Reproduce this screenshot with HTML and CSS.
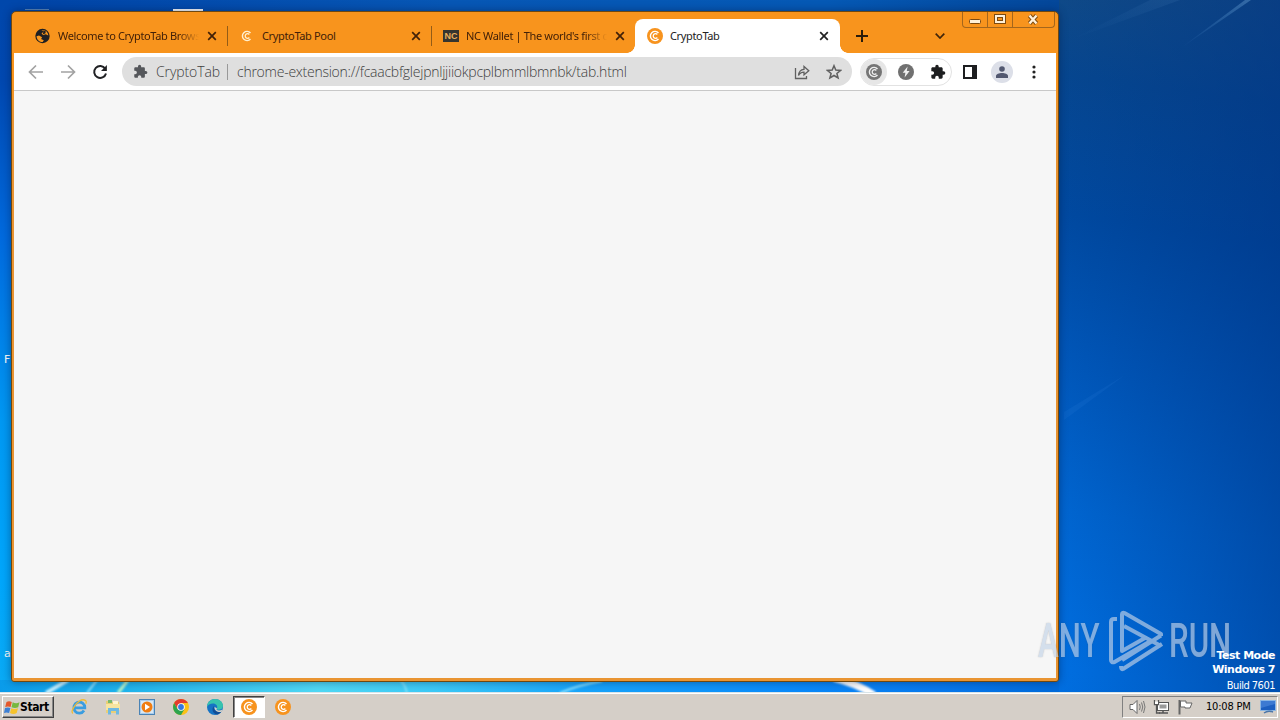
FILE: index.html
```html
<!DOCTYPE html>
<html lang="en">
<head>
    <meta charset="UTF-8">
    <meta name="viewport" content="width=device-width, initial-scale=1.0">
    <title>CryptoTab</title>
    <link rel="stylesheet" href="styles.css">
</head>
<body>
<!-- shared icons -->
<svg class="defs" width="0" height="0">
    <symbol id="coin" viewBox="0 0 16 16">
        <path d="M11.500 5A4.600 4.600 0 1 0 11.500 11" fill="none" stroke="currentColor" stroke-width="1.400"/>
        <path d="M10.300 6.500A2.300 2.300 0 1 0 10.300 9.500" fill="none" stroke="currentColor" stroke-width="1.300"/>
    </symbol>
    <symbol id="close" viewBox="0 0 10 10">
        <path d="M1.200 1.200L8.800 8.800M8.800 1.200L1.200 8.800" fill="none" stroke="currentColor" stroke-width="1.700"/>
    </symbol>
    <symbol id="puzzle" viewBox="0 0 24 24">
        <path fill="currentColor" d="M20.5 11H19V7c0-1.100-.9-2-2-2h-4V3.500a2.500 2.500 0 0 0-5 0V5H4c-1.100 0-2 .9-2 2v3.800h1.500a2.700 2.700 0 0 1 0 5.400H2V20c0 1.100.9 2 2 2h3.800v-1.500a2.700 2.700 0 0 1 5.400 0V22H17c1.100 0 2-.9 2-2v-4h1.500a2.500 2.500 0 0 0 0-5z"/>
    </symbol>
</svg>

<div class="desktop">
    <svg class="wallpaper" viewBox="0 0 1280 692">
        <defs>
            <linearGradient id="beam" x1="0" y1="1" x2="1" y2="0">
                <stop offset="0" stop-color="#4d8fd0" stop-opacity="0"/>
                <stop offset="1" stop-color="#5d94c8" stop-opacity=".5"/>
            </linearGradient>
            <filter id="soft" x="-20%" y="-20%" width="140%" height="140%"><feGaussianBlur stdDeviation="1.200"/></filter>
        </defs>
        <path d="M1178 50L1245 0h6z" fill="url(#beam)"/>
        <path d="M1070 40L1150 0h30z" fill="url(#beam)" opacity=".25"/>
        <path d="M1064 412L1125 375L1064 420z" fill="#3d8ae8" opacity=".12"/>
        <g fill="none" filter="url(#soft)">
            <path d="M46 693L68 680" stroke="#c4f0ff" stroke-width="4"/>
            <path d="M87 693L97 680" stroke="#9ee4fa" stroke-width="2"/>
            <path d="M118 693L128 680" stroke="#bdf5c8" stroke-width="3"/>
            <path d="M400 680q5 4 7 13" stroke="#7fe2fb" stroke-width="2"/>
            <path d="M560 693Q578 685 602 681" stroke="#8ee3ff" stroke-width="2"/>
            <path d="M834 678Q858 684 874 695" stroke="#fff" stroke-width="7"/>
        </g>
    </svg>
    <span class="peek peek-file"></span>
    <span class="peek peek-doc"></span>
    <span class="label label-f">F</span>
    <span class="label label-a">a</span>

    <div class="window">
        <div class="titlebar">
            <div class="tabs">
                <div class="tab">
                    <svg class="favicon" viewBox="0 0 16 16">
                        <circle cx="7.500" cy="8" r="7.200" fill="#1f2023"/>
                        <path d="M1.500 8.200L4 7.600 7.100 9.300 6.100 11 8.800 12.200 7.700 14C4.300 14 1.900 11.800 1.500 8.200zM4.800 2.700L7.100 2.200 8.700 3.600 6.500 5.400 8.100 7 10.800 6.300 13.300 7.500C13.100 4.300 10.800 2.200 7.500 2z" fill="#f8961d"/>
                        <path d="M8.500 2.300l2.400 1.200-.6 2-2.400.8z" fill="#1f2023"/>
                    </svg>
                    <span class="title fade">Welcome to CryptoTab Browser</span>
                    <svg class="close"><use href="#close"/></svg>
                </div>
                <div class="tab">
                    <svg class="favicon cream"><use href="#coin"/></svg>
                    <span class="title">CryptoTab Pool</span>
                    <svg class="close"><use href="#close"/></svg>
                </div>
                <div class="tab">
                    <span class="nc">NC</span>
                    <span class="title fade">NC Wallet | The world's first c</span>
                    <svg class="close"><use href="#close"/></svg>
                </div>
                <div class="tab active">
                    <span class="coin favicon"><svg><use href="#coin"/></svg></span>
                    <span class="title">CryptoTab</span>
                    <svg class="close"><use href="#close"/></svg>
                </div>
            </div>
            <svg class="new-tab" viewBox="0 0 12 12"><path d="M6 0v12M0 6h12" stroke="#2b1c0b" stroke-width="2"/></svg>
            <svg class="chevron" viewBox="0 0 10 6"><path d="M.7.7L5 5 9.300.7" fill="none" stroke="#40250a" stroke-width="1.700"/></svg>
            <div class="controls">
                <span class="control"><svg width="13" height="6"><rect x=".5" y=".5" width="11" height="4" rx="1" fill="#fff0d8" stroke="#7c4a10"/></svg></span>
                <span class="control max"><svg width="13" height="11"><rect x="2" y="2" width="8" height="6" fill="none" stroke="#7c4a10" stroke-width="4"/><rect x="2" y="2" width="8" height="6" fill="none" stroke="#fff0d8" stroke-width="2"/></svg></span>
                <span class="control exit"><svg width="13" height="11"><path d="M2.500 1.500l7 8M9.500 1.500l-7 8" stroke="#7c4a10" stroke-width="4.200"/><path d="M2.500 1.500l7 8M9.500 1.500l-7 8" stroke="#fff0d8" stroke-width="2.400"/></svg></span>
            </div>
        </div>

        <div class="toolbar">
            <div class="nav">
                <svg viewBox="0 0 16 16" class="off"><path d="M15 8H2M8 1.500L1.500 8 8 14.500"/></svg>
                <svg viewBox="0 0 16 16" class="off"><path d="M1 8h13M8 1.500L14.500 8 8 14.500"/></svg>
                <svg viewBox="0 0 16 16" class="reload"><path d="M13.200 4.600A6 6 0 1 0 14 9.500"/><path d="M14.900 1v6H9z" class="head"/></svg>
            </div>
            <div class="omnibox">
                <svg class="ext"><use href="#puzzle"/></svg>
                <span class="origin">CryptoTab</span>
                <span class="divider"></span>
                <span class="url">chrome-extension://fcaacbfglejpnljjiiokpcplbmmlbmnbk/tab.html</span>
                <svg class="share" viewBox="0 0 16 16"><path d="M1.500 4v10.500h11V12M4.500 11.500C4.800 7.600 6.700 5.600 10 5.300V2.500l4.800 4.200L10 10.800V8.200c-2.500 0-4.300 1-5.500 3.300z"/></svg>
                <svg class="star" viewBox="0 0 16 16"><path d="M8 1.700l1.800 4.300 4.700.4-3.600 3 1.200 4.600L8 11.500 3.900 14l1.200-4.600-3.600-3L6.200 6z"/></svg>
            </div>
            <div class="extensions">
                <span class="ring"><span class="coin grey"><svg><use href="#coin"/></svg></span></span>
                <svg class="bolt" viewBox="0 0 16 16"><circle cx="8" cy="8" r="8" fill="#707070"/><path d="M9.600 2.500L4.700 8.700h2.700l-.8 4.800 5-6.500H8.800z" fill="#f0f0f0"/></svg>
                <svg class="puzzle"><use href="#puzzle"/></svg>
            </div>
            <svg class="panel" viewBox="0 0 14 14"><rect x="1" y="1" width="12" height="12" fill="#fff" stroke="#1d1e20" stroke-width="2"/><path d="M9 1h4v12H9z" fill="#1d1e20"/></svg>
            <span class="avatar"><svg viewBox="0 0 12 12"><circle cx="6" cy="3" r="2.800"/><path d="M0 12V10C0 8 3 7 6 7s6 1 6 3v2z"/></svg></span>
            <svg class="menu" viewBox="0 0 4 14"><circle cx="2" cy="2" r="1.600"/><circle cx="2" cy="7" r="1.600"/><circle cx="2" cy="12" r="1.600"/></svg>
        </div>
        <div class="page"></div>
    </div>

    <div class="watermark">
        <span class="any">ANY</span>
        <svg viewBox="0 0 56 62">
            <path d="M8 9H5Q2 9 2 12v38q0 3 3.500 2L40 32"/>
            <path d="M52 26V24L15.500 3Q13 2 13 4.500V41L36 28M15 16l37 20"/>
            <path d="M52 25.500L13 50M53 34L14 59Q12 60 12 56"/>
        </svg>
        <span class="run">RUN</span>
    </div>
    <div class="build">
        <b>Test Mode</b>
        <b>Windows 7</b>
        <span>Build 7601</span>
    </div>
</div>

<div class="taskbar">
    <div class="start">
        <svg viewBox="0 0 16 15">
            <path d="M2.500 2Q5 .5 7.800 2L6.600 7Q4 5.800 1.200 7z" fill="#e4582b"/>
            <path d="M8.700 2.300Q12 4 15.500 2.300L14.200 7.200Q11 8.700 7.500 7.200z" fill="#77b83e"/>
            <path d="M1 8Q4 6.800 6.400 8L5.100 13Q2.500 11.800 0 13z" fill="#3e80d4"/>
            <path d="M7.300 8.200Q10.500 9.800 14 8.200L12.700 13Q9.500 14.800 6 13z" fill="#f6c32c"/>
        </svg>
        <span>Start</span>
    </div>
    <div class="launchers">
        <div class="launcher">
            <svg viewBox="0 0 16 16">
                <path d="M13 11.500A5.500 5.500 0 1 1 13.800 8.800H4" fill="none" stroke="#3a9de0" stroke-width="2.800"/>
                <path d="M2 14.300C-2 13 8-2 14.300 1.300q1.500 1 .5 3.400" fill="none" stroke="#eebb35" stroke-width="1.300"/>
            </svg>
        </div>
        <div class="launcher">
            <svg viewBox="0 0 16 16">
                <path d="M1 2h5l1 1h7v11H1z" fill="#e9cf76"/>
                <path d="M3 1h4v3H3z" fill="#78b96b"/><path d="M8 2h5v3H8z" fill="#fff5cf"/>
                <path d="M1 5h14v6H1z" fill="#f7e5a0"/>
                <path d="M3 15.500V9h11v6.500h-3V12H6v3.500z" fill="#6fb9e2"/>
            </svg>
        </div>
        <div class="launcher">
            <svg viewBox="0 0 16 16">
                <rect x=".5" y=".5" width="15" height="15" fill="#a9cdee" stroke="#4a83b5"/>
                <rect x="2" y="2" width="12" height="12" fill="#d9e8f3"/>
                <circle cx="8" cy="8" r="5.500" fill="#f07d12"/><path d="M6 4.800v6.400L11 8z" fill="#fff"/>
            </svg>
        </div>
        <div class="launcher">
            <svg viewBox="0 0 16 16">
                <circle cx="8" cy="8" r="8" fill="#fbc116"/>
                <path d="M1.100 4A8 8 0 0 1 14.900 4H8L4.500 10z" fill="#e33b2e"/>
                <path d="M1.100 4A8 8 0 0 0 8 16l3.500-6H4.500z" fill="#2da44e"/>
                <circle cx="8" cy="8" r="3.800" fill="#fff"/><circle cx="8" cy="8" r="2.900" fill="#3478e0"/>
            </svg>
        </div>
        <div class="launcher">
            <svg viewBox="0 0 16 16">
                <circle cx="8" cy="8" r="8" fill="#1673c4"/>
                <path d="M0 8C0 3 4 0 8 0c5 0 8 3.500 8 6.800 0 2.500-2 3.900-4.300 3.900-1.800 0-2.400-.7-1.700-1.500C11 7 9 4.600 6 4.600 3 4.600.8 6.200 0 8z" fill="#37c3ae"/>
                <path d="M7 7c-1 4 2.500 6.500 7.500 5.600-1 1.600-3 2.700-4.500 3C5 14.500 4.500 9 7 7z" fill="#124d96"/>
                <path d="M10 9.200c-1 1-.4 2.200 2 2.200 1.300 0 2.400-.3 3.300-.9L14.500 13C10 13.500 7 11 7.600 8z" fill="#d6d2c9"/>
            </svg>
        </div>
        <div class="launcher open"><span class="coin"><svg><use href="#coin"/></svg></span></div>
        <div class="launcher"><span class="coin"><svg><use href="#coin"/></svg></span></div>
    </div>
    <div class="tray">
        <svg class="speaker" viewBox="0 0 17 16"><path d="M1 5.500h3L8 1.500v13l-4-4H1z" fill="#fff" stroke="#666"/><path d="M10.500 5q1.500 3 0 6M12.500 3.500q2.500 4.500 0 9M14.500 2q3 6 0 12" fill="none" stroke="#777"/></svg>
        <svg class="network" viewBox="0 0 17 16"><rect x="4.500" y="3.500" width="11" height="8" fill="#fff" stroke="#555"/><rect x="6.500" y="5.500" width="7" height="4" fill="#999"/><path d="M6 14h9M10 12v2" stroke="#555" stroke-width="1.500"/><path d="M1.500 1v4.500h4V1M3.500 5.500V14H7" fill="none" stroke="#555" stroke-width="1.300"/><path d="M2 2.500h3V5H2z" fill="#fff"/></svg>
        <svg class="flag" viewBox="0 0 17 16"><path d="M2.500 1v14.500" stroke="#666" stroke-width="2"/><path d="M3.500 2h5.500v2h6l-2 5H8V8H3.500z" fill="#fff" stroke="#666"/></svg>
        <span class="clock">10:08 PM</span>
        <svg class="monitor" viewBox="0 0 16 14"><path d="M.5.5h15v10H.5z" fill="#1d5fc0" stroke="#8bb6e4"/><path d="M1 1h14v3L1 8z" fill="#3d7ad2"/><path d="M4 13q4-3 9-1" fill="none" stroke="#4c76a8" stroke-width="1.500"/></svg>
    </div>
</div>
</body>
</html>
```
FILE: styles.css
```css
body {
    margin: 0;
    width: 1280px;
    height: 720px;
    overflow: hidden;
    display: flex;
    flex-direction: column;
    font-family: "Noto Sans", sans-serif;
    font-size: 11px;
}
svg {
    display: block;
    flex: none;
}
.defs {
    position: absolute;
}

/* desktop */
.desktop {
    position: relative;
    height: 692px;
    background:
        linear-gradient(to bottom, #0047ab 0%, #0048b0 12%, #006ade 35%, #0098f2 62%, #00a6fb 85%, #0aaaf5 100%) 0 0 / 40px 680px no-repeat,
        linear-gradient(to right, #0a9bea 0%, #20b4ec 12%, #50d8f4 30%, #3cc9f6 41%, #18a4fa 55%, #0a8afa 75%, #0878ec 89%, #006ada 100%) 0 680px / 1059px 12px no-repeat,
        linear-gradient(to right, #0043a6 0%, #0757b5 42%, #0559b5 78%, #04479a 100%) 0 0 / 1059px 11px no-repeat,
        linear-gradient(to right, rgba(0, 50, 130, 0) 83%, rgba(0, 50, 130, .5) 100%),
        linear-gradient(188deg, #124a85 0%, #06468f 12%, #0049a0 28%, #0056b8 44%, #0065d0 62%, #006ee0 80%, #006bda 100%);
}
.wallpaper {
    position: absolute;
    inset: 0;
}
.peek {
    position: absolute;
    top: 9px;
    height: 2px;
    background: #fff;
}
.peek-file {
    left: 25px;
    width: 24px;
    height: 1px;
    background: #5b87b8;
}
.peek-doc {
    left: 173px;
    width: 30px;
}
.label {
    position: absolute;
    left: 4px;
    color: #fff;
    font: 11px/14px "DejaVu Sans", sans-serif;
}
.label-f {
    top: 353px;
}
.label-a {
    top: 647px;
}

/* browser window */
.window {
    position: absolute;
    left: 11px;
    top: 11px;
    box-sizing: border-box;
    width: 1048px;
    height: 671px;
    display: flex;
    flex-direction: column;
    border: 1px solid #70480f;
    border-radius: 5px 5px 3px 3px;
    padding: 0 2px 3px;
    background: linear-gradient(#f8941d 70px, #e99432 100px);
    box-shadow: 0 0 9px rgba(0, 20, 60, .45);
}
.titlebar {
    position: relative;
    display: flex;
    height: 41px;
    padding-left: 9px;
}
.tabs {
    display: flex;
    align-items: flex-end;
}
.tab {
    position: relative;
    box-sizing: border-box;
    width: 204px;
    height: 34px;
    display: flex;
    align-items: center;
    padding: 0 9px 0 12px;
    color: #422108;
}
.tab:nth-child(-n+2)::after {
    content: "";
    position: absolute;
    right: -1px;
    top: 7px;
    width: 1px;
    height: 20px;
    background: #935c17;
}
.tab.active {
    width: 205px;
    padding-right: 10px;
    background: #fff;
    color: #222;
    border-radius: 8px 8px 0 0;
}
/* outward curves at the foot of the active tab */
.tab.active::before,
.tab.active::after {
    content: "";
    position: absolute;
    bottom: 0;
    width: 8px;
    height: 8px;
}
.tab.active::before {
    left: -8px;
    background: radial-gradient(circle at 0 0, transparent 7.5px, #fff 8px);
}
.tab.active::after {
    right: -8px;
    background: radial-gradient(circle at 100% 0, transparent 7.5px, #fff 8px);
}
.favicon {
    width: 16px;
    height: 16px;
    margin-right: 7px;
}
.cream {
    color: #fff0d0;
}
.title {
    flex: 1;
    width: 0;
    overflow: hidden;
    white-space: nowrap;
    line-height: 16px;
    letter-spacing: -.35px;
    margin-right: 8px;
}
.fade {
    -webkit-mask-image: linear-gradient(to right, #000 85%, transparent 100%);
    mask-image: linear-gradient(to right, #000 85%, transparent 100%);
}
.close {
    width: 10px;
    height: 10px;
    margin-right: 1px;
}
.nc {
    flex: none;
    width: 16px;
    height: 12px;
    margin-right: 7px;
    background: #36352f;
    color: #e8b05c;
    font: bold 9px/13px "Liberation Sans", sans-serif;
    text-align: center;
}
.coin {
    flex: none;
    width: 16px;
    height: 16px;
    border-radius: 50%;
    background: #f7931e;
    color: #fff;
}
.coin svg {
    width: 100%;
    height: 100%;
}
.coin.grey {
    background: #757575;
    color: #eee;
}
.new-tab {
    width: 12px;
    height: 12px;
    margin: 18px 0 0 16px;
}
.chevron {
    width: 10px;
    height: 6px;
    margin: 21px 0 0 67px;
}
.controls {
    display: flex;
    box-sizing: border-box;
    margin-left: auto;
    margin-right: 1px;
    width: 93px;
    height: 16px;
    border: 1px solid #a4661c;
    border-top: 0;
    border-radius: 0 0 4px 4px;
}
.control {
    box-sizing: border-box;
    width: 25px;
    display: flex;
    align-items: flex-end;
    justify-content: center;
    padding-bottom: 2px;
    border-right: 1px solid #a4661c;
}
.control.exit {
    width: 41px;
    border: 0;
}

/* toolbar */
.toolbar {
    box-sizing: border-box;
    flex: none;
    height: 38px;
    display: flex;
    align-items: center;
    padding-left: 14px;
    background: #fff;
    border-bottom: 1px solid #c8c8c8;
}
.nav {
    display: flex;
    gap: 16px;
    margin-right: 14px;
}
.nav svg {
    width: 16px;
    height: 16px;
    fill: none;
    stroke: #202124;
    stroke-width: 2;
}
.nav .off {
    stroke: #a2a2a2;
    stroke-width: 1.7;
}
.nav .head {
    fill: #202124;
    stroke: none;
}
.omnibox {
    box-sizing: border-box;
    width: 730px;
    height: 29px;
    display: flex;
    align-items: center;
    padding: 0 10px 0 11px;
    border-radius: 15px;
    background: #dfdfdf;
    color: #404040;
    font: 300 14px/20px "Open Sans", sans-serif;
    white-space: nowrap;
}
.ext {
    width: 15px;
    height: 15px;
    color: #55575b;
    margin-right: 8px;
}
.origin {
    width: 71px;
    letter-spacing: -.1px;
}
.divider {
    width: 1px;
    height: 16px;
    margin-right: 9px;
    background: #999;
}
.url {
    letter-spacing: -.25px;
}
.share {
    margin-left: auto;
    margin-right: 16px;
}
.share,
.star {
    width: 16px;
    height: 16px;
    fill: none;
    stroke: #606060;
    stroke-width: 1.3;
}
.star {
    stroke-width: 1.5;
}
.extensions {
    box-sizing: border-box;
    width: 92px;
    height: 28px;
    margin-left: 8px;
    display: flex;
    align-items: center;
    border: 1px solid #e2e2e2;
    border-radius: 14px;
}
.ring {
    width: 26px;
    height: 26px;
    display: flex;
    align-items: center;
    justify-content: center;
    border-radius: 50%;
    background: #e6e6e6;
}
.bolt {
    width: 16px;
    height: 16px;
    margin: 0 16px 0 11px;
}
.puzzle {
    width: 16px;
    height: 16px;
    color: #1d1e20;
}
.panel {
    width: 14px;
    height: 14px;
    margin-left: 11px;
}
.avatar {
    width: 22px;
    height: 22px;
    margin: 0 19px 0 14px;
    display: flex;
    align-items: center;
    justify-content: center;
    border-radius: 50%;
    background: #dcdfe8;
}
.avatar svg {
    width: 12px;
    height: 12px;
    fill: #525870;
}
.menu {
    width: 4px;
    height: 14px;
    fill: #222;
}
.page {
    flex: 1;
    background: #f6f6f6;
}

/* watermark and build info lie over the window and the desktop */
.watermark {
    position: absolute;
    left: 1038px;
    top: 609px;
    height: 64px;
    display: flex;
    align-items: center;
    color: #c3d3e8;
    opacity: .65;
    font: 500 48px/64px "Roboto", sans-serif;
    text-shadow: 0 0 2px rgba(80, 80, 80, .5);
}
.watermark span {
    transform-origin: 0 50%;
    transform: scaleX(.65);
}
.any {
    width: 71px;
}
.watermark svg {
    width: 56px;
    height: 62px;
    margin-right: 4px;
    fill: none;
    stroke: #c3d3e8;
    stroke-width: 4;
    stroke-linejoin: round;
}
.run {
    width: 62px;
}
.build {
    position: absolute;
    right: 5px;
    top: 649px;
    display: flex;
    flex-direction: column;
    align-items: flex-end;
    color: #fff;
    font: 11px/14px "DejaVu Sans", sans-serif;
    letter-spacing: -.5px;
}
.build span {
    font-family: "DejaVu Sans Condensed", "DejaVu Sans", sans-serif;
    font-stretch: condensed;
    line-height: 18px;
}

/* taskbar */
.taskbar {
    box-sizing: border-box;
    height: 28px;
    display: flex;
    align-items: center;
    padding: 1px 2px 0;
    border-top: 1px solid #d9e4e8;
    background: #d5cfc8;
    box-shadow: inset 0 1px #fff;
}
.start {
    box-sizing: border-box;
    width: 52px;
    height: 22px;
    display: flex;
    align-items: center;
    padding-left: 1px;
    border: 1px solid;
    border-color: #fff #404040 #404040 #fff;
    box-shadow: inset -1px -1px #888;
    font: bold 12px/16px "DejaVu Sans Condensed", "DejaVu Sans", sans-serif;
    font-stretch: condensed;
    letter-spacing: -.4px;
}
.start svg {
    width: 16px;
    height: 15px;
}
.launchers {
    display: flex;
    gap: 2px;
    margin-left: 9px;
}
.launcher {
    box-sizing: border-box;
    width: 32px;
    height: 22px;
    display: flex;
    align-items: center;
    justify-content: center;
}
.launcher svg {
    width: 16px;
    height: 16px;
}
.launcher.open {
    background: #fff;
    border: 1px solid;
    border-color: #404040 #fff #fff #404040;
    box-shadow: inset 1px 1px #888;
}
.tray {
    box-sizing: border-box;
    width: 156px;
    height: 22px;
    margin-left: auto;
    display: flex;
    align-items: center;
    padding-left: 6px;
    border: 1px solid;
    border-color: #808080 #fff #fff #808080;
}
.speaker,
.network,
.flag {
    width: 17px;
    height: 16px;
    margin-right: 7px;
}
.clock {
    width: 54px;
    margin-left: 5px;
    white-space: nowrap;
    font: 11px/16px "DejaVu Sans Condensed", "DejaVu Sans", sans-serif;
    font-stretch: condensed;
    letter-spacing: -.2px;
}
.monitor {
    width: 16px;
    height: 14px;
}
```
